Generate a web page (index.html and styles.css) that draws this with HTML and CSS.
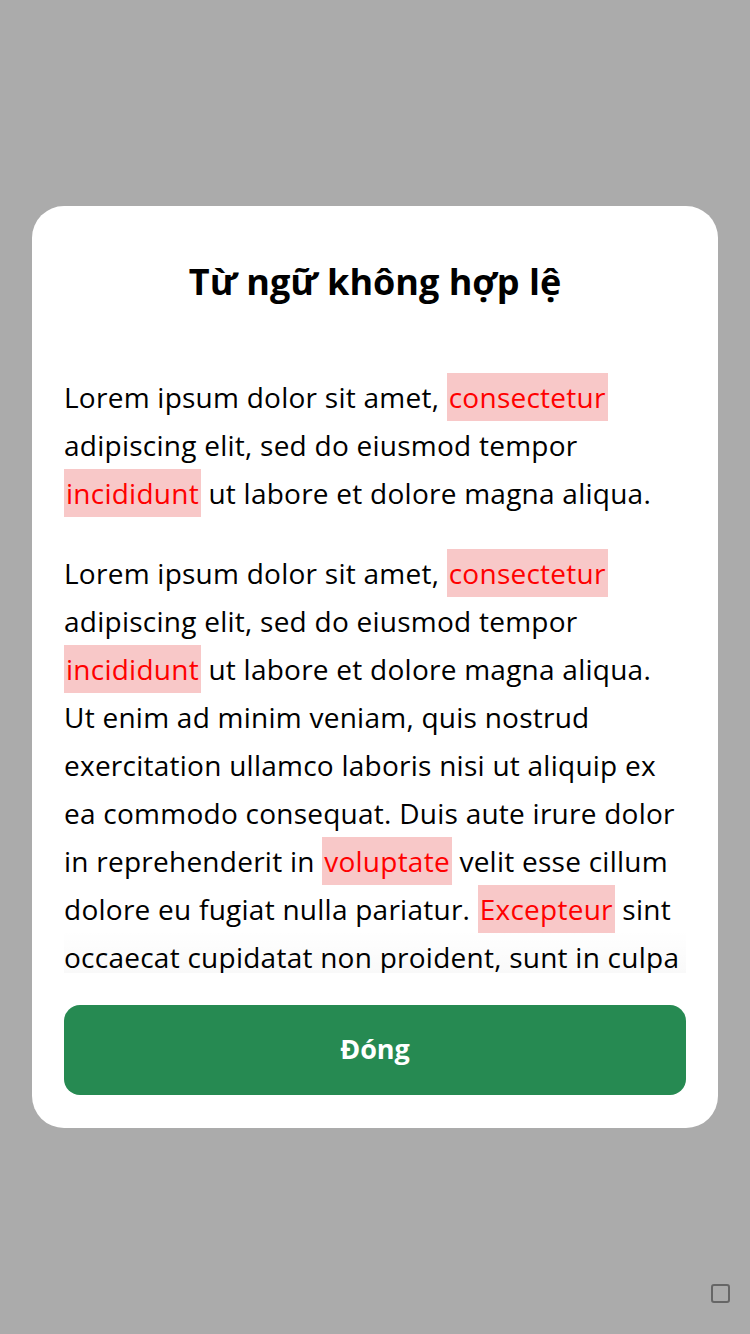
FILE: index.html
```html
<!DOCTYPE html>
<html lang="vi">
<head>
<meta charset="utf-8">
<link rel="stylesheet" href="styles.css">
</head>
<body>
<div class="screen">
  <div class="modal">
    <h1 class="title">Từ ngữ không hợp lệ</h1>
    <div class="scroll">
      <div class="content">
        <p class="para">Lorem ipsum dolor sit amet, <span class="bad">consectetur</span> adipiscing elit, sed do eiusmod tempor <span class="bad">incididunt</span> ut labore et dolore magna aliqua.</p>
        <p class="para">Lorem ipsum dolor sit amet, <span class="bad">consectetur</span> adipiscing elit, sed do eiusmod tempor <span class="bad">incididunt</span> ut labore et dolore magna aliqua. Ut enim ad minim veniam, quis nostrud exercitation ullamco laboris nisi ut aliquip ex ea commodo consequat. Duis aute irure dolor in reprehenderit in <span class="bad">voluptate</span> velit esse cillum dolore eu fugiat nulla pariatur. <span class="bad">Excepteur</span> sint occaecat cupidatat non proident, sunt in culpa qui officia deserunt mollit anim id est laborum.</p>
      </div>
      <div class="fade"></div>
    </div>
    <button class="close-btn" type="button">Đóng</button>
  </div>
  <div class="corner-icon"></div>
</div>
</body>
</html>
```

FILE: styles.css
```css
html, body {
  margin: 0;
  padding: 0;
}
body {
  background: #ababab;
  font-family: "Open Sans", "Noto Sans", sans-serif;
  width: 750px;
  height: 1334px;
  overflow: hidden;
}
.screen {
  position: relative;
  width: 750px;
  height: 1334px;
  display: flex;
  justify-content: center;
  padding-top: 206px;
  box-sizing: border-box;
}
.modal {
  width: 686px;
  height: 922px;
  box-sizing: border-box;
  background: #ffffff;
  border-radius: 32px;
  padding: 44px 32px 33px;
  display: flex;
  flex-direction: column;
}
.title {
  margin: 0;
  text-align: center;
  font-size: 36px;
  line-height: 64px;
  font-weight: 700;
  color: #000;
}
.scroll {
  position: relative;
  margin-top: 59px;
  height: 600px;
  overflow: hidden;
}
.content {
  font-size: 28px;
  line-height: 48px;
  letter-spacing: 0.25px;
  color: #000;
}
.para {
  margin: 0 0 32px;
}
.bad {
  color: #ff0000;
  background: #f8c8c8;
  padding: 0 2px;
  display: inline-block;
  line-height: 48px;
}
.fade {
  position: absolute;
  left: -32px;
  right: -32px;
  bottom: 0;
  height: 44px;
  background: linear-gradient(to bottom, rgba(0,0,0,0), rgba(0,0,0,0.025));
}
.close-btn {
  margin-top: 32px;
  height: 90px;
  padding: 0 0 4px;
  border: none;
  border-radius: 16px;
  background: #268a52;
  color: #fff;
  font-family: inherit;
  font-size: 27px;
  font-weight: 700;
}
.corner-icon {
  position: absolute;
  left: 711px;
  top: 1284px;
  width: 15px;
  height: 15px;
  border: 2.5px solid #666;
  border-radius: 3px;
}
```
